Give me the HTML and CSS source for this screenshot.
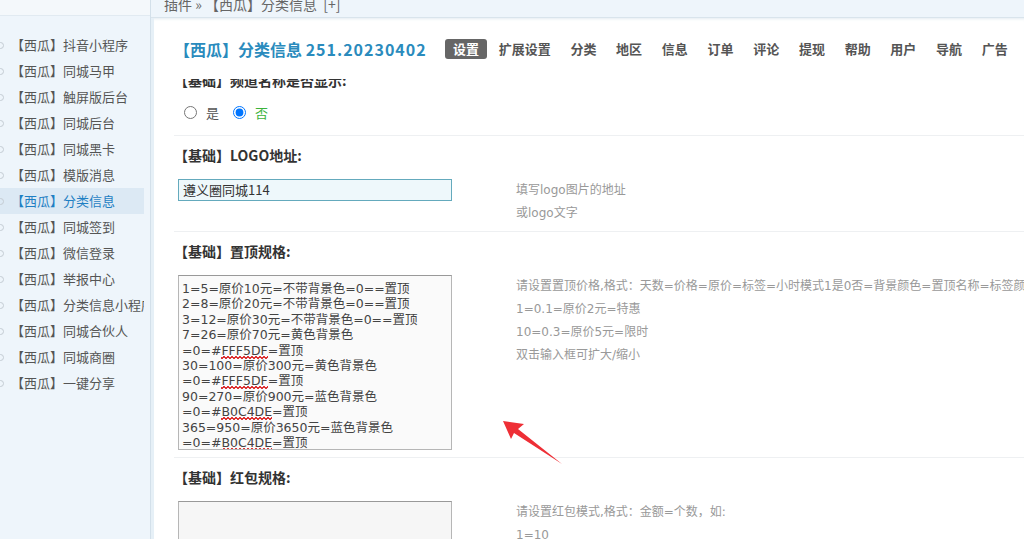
FILE: index.html
```html
<!DOCTYPE html>
<html lang="zh-CN">
<head>
<meta charset="utf-8">
<title>【西瓜】分类信息</title>
<link rel="stylesheet" href="styles.css">
</head>
<body>
<div class="app">
  <aside class="sidebar">
    <div class="sidebar-top"></div>
    <ul class="nav">
      <li>【西瓜】抖音小程序</li>
      <li>【西瓜】同城马甲</li>
      <li>【西瓜】触屏版后台</li>
      <li>【西瓜】同城后台</li>
      <li>【西瓜】同城黑卡</li>
      <li>【西瓜】模版消息</li>
      <li class="active">【西瓜】分类信息</li>
      <li>【西瓜】同城签到</li>
      <li>【西瓜】微信登录</li>
      <li>【西瓜】举报中心</li>
      <li>【西瓜】分类信息小程序</li>
      <li>【西瓜】同城合伙人</li>
      <li>【西瓜】同城商圈</li>
      <li>【西瓜】一键分享</li>
    </ul>
  </aside>
  <main class="main">
    <div class="crumb"><span class="crumb-text">插件 &raquo; 【西瓜】分类信息 &nbsp;[+]</span></div>
    <section class="panel">
      <header class="panel-head">
        <h1 class="title">【西瓜】分类信息 <span class="ver">251.20230402</span></h1>
        <nav class="tabs">
          <span class="tab on">设置</span>
          <span class="tab">扩展设置</span>
          <span class="tab">分类</span>
          <span class="tab">地区</span>
          <span class="tab">信息</span>
          <span class="tab">订单</span>
          <span class="tab">评论</span>
          <span class="tab">提现</span>
          <span class="tab">帮助</span>
          <span class="tab">用户</span>
          <span class="tab">导航</span>
          <span class="tab">广告</span>
        </nav>
      </header>
      <div class="content">
        <div class="row first">
          <div class="label cut">【基础】频道名称是否显示:</div>
          <div class="radios">
            <label class="radio"><input type="radio" name="show"> 是</label>
            <label class="radio yes"><input type="radio" name="show" checked> 否</label>
          </div>
        </div>
        <div class="row">
          <div class="label">【基础】LOGO地址:</div>
          <div class="field">
            <div class="ctl"><div class="input">遵义圈同城114</div></div>
            <div class="help">填写logo图片的地址<br>或logo文字</div>
          </div>
        </div>
        <div class="row">
          <div class="label">【基础】置顶规格:</div>
          <div class="field">
            <div class="ctl">
              <div class="textarea">1=5=原价10元=不带背景色=0==置顶<br>2=8=原价20元=不带背景色=0==置顶<br>3=12=原价30元=不带背景色=0==置顶<br>7=26=原价70元=黄色背景色<br>=0=#<span class="sp">FFF5DF</span>=置顶<br>30=100=原价300元=黄色背景色<br>=0=#<span class="sp">FFF5DF</span>=置顶<br>90=270=原价900元=蓝色背景色<br>=0=#<span class="sp">B0C4DE</span>=置顶<br>365=950=原价3650元=蓝色背景色<br>=0=#<span class="sp">B0C4DE</span>=置顶</div>
            </div>
            <div class="help">请设置置顶价格,格式：天数=价格=原价=标签=小时模式1是0否=背景颜色=置顶名称=标签颜色<br>1=0.1=原价2元=特惠<br>10=0.3=原价5元=限时<br>双击输入框可扩大/缩小</div>
          </div>
        </div>
        <div class="row">
          <div class="label">【基础】红包规格:</div>
          <div class="field">
            <div class="ctl"><div class="textarea empty"></div></div>
            <div class="help">请设置红包模式,格式：金额=个数，如:<br>1=10</div>
          </div>
        </div>
      </div>
      <svg class="arrow" width="70" height="56" viewBox="0 0 70 56" aria-hidden="true">
        <polygon points="2,1 23,4 17,9 61,44 13,13 10,19" fill="#ee2f36"/>
      </svg>
    </section>
  </main>
</div>
</body>
</html>
```

FILE: styles.css
```css
* { box-sizing: border-box; }
html, body {
  margin: 0;
  padding: 0;
  width: 1024px;
  height: 539px;
  overflow: hidden;
  background: #fff;
  font-family: "Noto Sans CJK SC", "Noto Sans", "Liberation Sans", sans-serif;
  font-size: 13px;
  color: #444;
}
.app {
  display: flex;
  height: 539px;
}
.sidebar {
  width: 151px;
  flex: none;
  background: #eef5fb;
  border-right: 1px solid #d3e0ea;
  overflow: hidden;
}
.sidebar-top {
  height: 16px;
  background: #f4f8fb;
  border-bottom: 1px solid #e1eaf1;
}
.nav {
  list-style: none;
  margin: 0;
  padding: 16px 0 0 0;
}
.nav li {
  position: relative;
  height: 26px;
  line-height: 26px;
  padding-left: 11px;
  margin-right: 6px;
  color: #555;
  white-space: nowrap;
  overflow: hidden;
  font-size: 13px;
}
.nav li::before {
  content: "";
  position: absolute;
  left: -3px;
  top: 10px;
  width: 5px;
  height: 5px;
  border: 1px solid #c4ccd3;
  border-radius: 50%;
}
.nav li.active {
  background: #dce9f4;
  color: #1f7fc3;
}
.main {
  flex: 1;
  display: flex;
  flex-direction: column;
  background: #e6f0f7;
  min-width: 0;
}
.crumb {
  height: 18px;
  flex: none;
  background: #eef5fb;
  border-bottom: 1px solid #d9e4ec;
  padding-left: 13px;
  overflow: hidden;
  color: #666;
  font-size: 14px;
}
.crumb-text {
  display: block;
  line-height: 16px;
  margin-top: -4px;
  white-space: nowrap;
}
.panel {
  position: relative;
  flex: 1;
  margin-left: 3px;
  background: #fff;
  overflow: hidden;
  box-shadow: inset 0 3px 3px -2px #e3ebf1;
}
.panel-head {
  height: 61px;
  display: flex;
  align-items: center;
  padding-left: 20px;
}
.title {
  margin: 0;
  width: 271px;
  flex: none;
  font-size: 16px;
  font-weight: bold;
  color: #2a8bbd;
  white-space: nowrap;
}
.ver {
  letter-spacing: 1px;
}
.tabs {
  display: flex;
  gap: 3.7px;
  white-space: nowrap;
}
.tab {
  padding: 0 8px;
  height: 20px;
  line-height: 20px;
  font-size: 13px;
  font-weight: bold;
  color: #555;
  border-radius: 3px;
}
.tab.on {
  background: #666;
  color: #fff;
}
.content {
  overflow: hidden;
  height: 460px;
}
.row {
  margin-left: 20px;
  border-top: 1px solid #eef0f2;
  padding: 11px 0 7px 0;
}
.row.first {
  border-top: 0;
  padding: 0 0 13px 0;
}
.label {
  height: 16px;
  line-height: 16px;
  font-size: 14px;
  font-weight: bold;
  color: #333;
  margin-left: 0;
  margin-bottom: 16px;
  white-space: nowrap;
}
.label.cut {
  margin-top: -7px;
  margin-bottom: 14px;
}
.radios {
  display: flex;
  align-items: center;
  height: 20px;
  color: #555;
}
.radio {
  display: flex;
  align-items: center;
  margin-right: 14px;
}
.radio input {
  margin: 0 9px 0 10px;
  width: 13px;
  height: 13px;
}
.radio.yes input { margin-left: 0; }
.radio.yes { color: #3bb33b; }
.field {
  display: flex;
  align-items: flex-start;
}
.ctl {
  width: 342px;
  flex: none;
  padding-left: 4px;
}
.input {
  width: 274px;
  height: 22px;
  line-height: 20px;
  border: 1px solid #64aabd;
  background: #eef8fb;
  padding: 0 4px;
  color: #333;
  font-size: 13px;
}
.textarea {
  width: 274px;
  height: 175px;
  border: 1px solid #b6b6b6;
  border-top-color: #999;
  background: #fafafa;
  padding: 5px 3px 3px;
  font-family: "DejaVu Sans", "Noto Sans CJK SC", sans-serif;
  font-size: 12.5px;
  line-height: 15.4px;
  color: #444;
  white-space: nowrap;
  overflow: hidden;
}
.textarea.empty {
  height: 80px;
  background: #f6f6f6;
}
.sp {
  background:
    linear-gradient(135deg, transparent 30%, #d33 30%, #d33 62%, transparent 62%) 0 100% / 4px 3px repeat-x,
    linear-gradient(45deg, transparent 30%, #d33 30%, #d33 62%, transparent 62%) 2px 100% / 4px 3px repeat-x;
  padding-bottom: 1px;
}
.help {
  margin-top: 0;
  margin-bottom: -1px;
  font-family: "DejaVu Sans", "Noto Sans CJK SC", sans-serif;
  font-size: 12px;
  line-height: 23px;
  color: #999;
  white-space: nowrap;
}
.arrow {
  position: absolute;
  left: 347px;
  top: 402px;
}
```
